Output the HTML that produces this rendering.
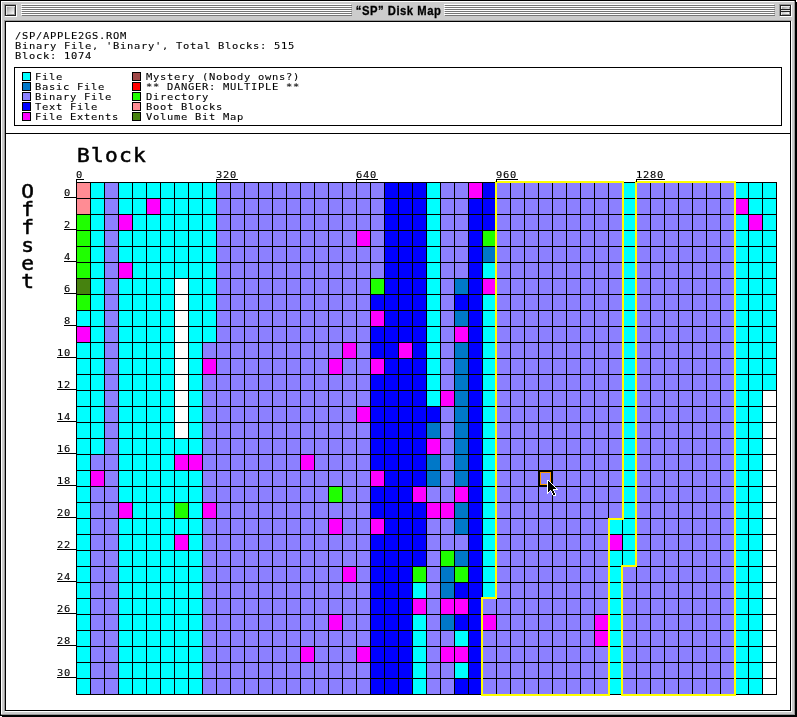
<!DOCTYPE html>
<html lang="en">
<head>
<meta charset="utf-8">
<title>"SP" Disk Map</title>
<style>
html,body{margin:0;padding:0;background:#fff;}
body{width:797px;height:717px;position:relative;overflow:hidden;}
.win{position:absolute;left:0;top:0;width:797px;height:717px;}
.abs{position:absolute;}
.t{position:absolute;white-space:pre;color:#000;line-height:12px;transform:scaleX(1.1);transform-origin:0 0;will-change:transform;}
.s{font-family:"DejaVu Sans Mono", "Liberation Mono", monospace;font-size:9.5px;letter-spacing:0.645px;-webkit-text-stroke:0.1px #000;}
.b{font-family:"DejaVu Sans Mono", "Liberation Mono", monospace;font-size:19.3px;letter-spacing:1.109px;line-height:18px;-webkit-text-stroke:0.5px #000;}
.title{position:absolute;left:0;top:4px;width:797px;text-align:center;font-family:"Liberation Sans",sans-serif;font-weight:bold;font-size:12.5px;letter-spacing:0.58px;line-height:14px;color:#000;white-space:pre;will-change:transform;}
.title span{position:relative;left:0px;display:inline-block;transform:scaleX(0.9);transform-origin:50% 50%;-webkit-text-stroke:0.3px #000;}
.v{writing-mode:vertical-rl;text-orientation:upright;letter-spacing:-5.0px;line-height:24px;}
.sw{position:absolute;width:7px;height:7px;border:1px solid #000;display:block;}
.map{position:absolute;left:0;top:0;}
</style>
</head>
<body>
<div class="win">
<!-- window frame -->
<div class="abs" style="left:0;top:0;width:796px;height:716px;background:#000"></div>
<div class="abs" style="left:2px;top:2px;width:795px;height:715px;background:#000"></div>
<div class="abs" style="left:1px;top:1px;width:794px;height:714px;background:#999"></div>
<div class="abs" style="left:1px;top:1px;width:793px;height:713px;background:#fff"></div>
<div class="abs" style="left:2px;top:2px;width:792px;height:712px;background:#ccc"></div>
<!-- title bar stripes -->
<div class="abs" style="left:21px;top:4px;width:330px;height:12px;background:repeating-linear-gradient(to bottom,#fff 0,#fff 1px,transparent 1px,transparent 2px)"></div>
<div class="abs" style="left:22px;top:4px;width:330px;height:12px;background:repeating-linear-gradient(to bottom,transparent 0,transparent 1px,#777 1px,#777 2px)"></div>
<div class="abs" style="left:444px;top:4px;width:330px;height:12px;background:repeating-linear-gradient(to bottom,#fff 0,#fff 1px,transparent 1px,transparent 2px)"></div>
<div class="abs" style="left:445px;top:4px;width:330px;height:12px;background:repeating-linear-gradient(to bottom,transparent 0,transparent 1px,#777 1px,#777 2px)"></div>
<!-- close box -->
<div class="abs" style="left:4px;top:4px;width:12px;height:12px;background:#999"></div>
<div class="abs" style="left:5px;top:5px;width:12px;height:12px;background:#fff"></div>
<div class="abs" style="left:5px;top:5px;width:11px;height:11px;background:#222"></div>
<div class="abs" style="left:6px;top:6px;width:9px;height:9px;background:#e8e8e8"></div>
<div class="abs" style="left:6px;top:6px;width:1px;height:1px;background:#fff"></div>
<div class="abs" style="left:7px;top:7px;width:8px;height:8px;background:#999"></div>
<div class="abs" style="left:7px;top:7px;width:7px;height:7px;background:linear-gradient(135deg,#a0a0a0 0%,#d0d0d0 50%,#fff 100%)"></div>
<!-- collapse box -->
<div class="abs" style="left:779px;top:4px;width:12px;height:12px;background:#999"></div>
<div class="abs" style="left:780px;top:5px;width:12px;height:12px;background:#fff"></div>
<div class="abs" style="left:780px;top:5px;width:11px;height:11px;background:#222"></div>
<div class="abs" style="left:781px;top:6px;width:9px;height:9px;background:#e8e8e8"></div>
<div class="abs" style="left:781px;top:6px;width:1px;height:1px;background:#fff"></div>
<div class="abs" style="left:782px;top:7px;width:8px;height:8px;background:#999"></div>
<div class="abs" style="left:782px;top:7px;width:7px;height:7px;background:linear-gradient(135deg,#a0a0a0 0%,#d0d0d0 50%,#fff 100%)"></div>
<div class="abs" style="left:781px;top:9px;width:9px;height:3px;background:#222"></div>
<div class="abs" style="left:781px;top:10px;width:9px;height:1px;background:#ddd"></div>
<div class="title"><span>&#8220;SP&#8221; Disk Map</span></div>
<!-- content frame -->
<div class="abs" style="left:5px;top:21px;width:787px;height:691px;background:#fff"></div>
<div class="abs" style="left:4px;top:20px;width:787px;height:691px;background:#999"></div>
<div class="abs" style="left:5px;top:21px;width:786px;height:690px;background:#000"></div>
<div class="abs" style="left:6px;top:22px;width:784px;height:688px;background:#fff"></div>
<div class="abs" style="left:6px;top:133px;width:784px;height:1px;background:#000"></div>
<!-- info text -->
<span class="t s" style="left:14.5px;top:30px">/SP/APPLE2GS.ROM</span>
<span class="t s" style="left:14.5px;top:30px;margin-top:10px">Binary File, 'Binary', Total Blocks: 515</span>
<span class="t s" style="left:14.5px;top:30px;margin-top:20px">Block: 1074</span>
<!-- legend -->
<div class="abs" style="left:14px;top:67px;width:766px;height:57px;border:1px solid #000"></div>
<i class="sw" style="left:22px;top:72px;background:#00ffff"></i><span class="t s" style="left:35px;top:71px;margin-top:0px">File</span>
<i class="sw" style="left:22px;top:82px;background:#0078c8"></i><span class="t s" style="left:35px;top:71px;margin-top:10px">Basic File</span>
<i class="sw" style="left:22px;top:92px;background:#8c80ff"></i><span class="t s" style="left:35px;top:71px;margin-top:20px">Binary File</span>
<i class="sw" style="left:22px;top:102px;background:#0000ff"></i><span class="t s" style="left:35px;top:71px;margin-top:30px">Text File</span>
<i class="sw" style="left:22px;top:112px;background:#ff00ff"></i><span class="t s" style="left:35px;top:71px;margin-top:40px">File Extents</span>
<i class="sw" style="left:132px;top:72px;background:#a04848"></i><span class="t s" style="left:146px;top:71px;margin-top:0px">Mystery (Nobody owns?)</span>
<i class="sw" style="left:132px;top:82px;background:#ff0000"></i><span class="t s" style="left:146px;top:71px;margin-top:10px">** DANGER: MULTIPLE **</span>
<i class="sw" style="left:132px;top:92px;background:#1fff00"></i><span class="t s" style="left:146px;top:71px;margin-top:20px">Directory</span>
<i class="sw" style="left:132px;top:102px;background:#ff8c94"></i><span class="t s" style="left:146px;top:71px;margin-top:30px">Boot Blocks</span>
<i class="sw" style="left:132px;top:112px;background:#46820f"></i><span class="t s" style="left:146px;top:71px;margin-top:40px">Volume Bit Map</span>
<!-- axes titles -->
<span class="t b" style="left:77px;top:147px">Block</span>
<span class="t b v" style="left:14px;top:180px">Offset</span>
<svg class="map" width="797" height="717" viewBox="0 0 797 717" shape-rendering="crispEdges">
<rect x="76" y="182" width="701" height="513" fill="#000"/>
<path fill="#ff8c94" d="M77 183h13v15h-13zM77 199h13v15h-13z"/>
<path fill="#00ffff" d="M91 183h13v15h-13zM119 183h13v15h-13zM133 183h13v15h-13zM147 183h13v15h-13zM161 183h13v15h-13zM175 183h13v15h-13zM189 183h13v15h-13zM203 183h13v15h-13zM427 183h13v15h-13zM623 183h13v15h-13zM735 183h13v15h-13zM749 183h13v15h-13zM763 183h13v15h-13zM91 199h13v15h-13zM119 199h13v15h-13zM133 199h13v15h-13zM161 199h13v15h-13zM175 199h13v15h-13zM189 199h13v15h-13zM203 199h13v15h-13zM427 199h13v15h-13zM623 199h13v15h-13zM749 199h13v15h-13zM763 199h13v15h-13zM91 215h13v15h-13zM133 215h13v15h-13zM147 215h13v15h-13zM161 215h13v15h-13zM175 215h13v15h-13zM189 215h13v15h-13zM203 215h13v15h-13zM427 215h13v15h-13zM623 215h13v15h-13zM735 215h13v15h-13zM763 215h13v15h-13zM91 231h13v15h-13zM119 231h13v15h-13zM133 231h13v15h-13zM147 231h13v15h-13zM161 231h13v15h-13zM175 231h13v15h-13zM189 231h13v15h-13zM203 231h13v15h-13zM427 231h13v15h-13zM623 231h13v15h-13zM735 231h13v15h-13zM749 231h13v15h-13zM763 231h13v15h-13zM91 247h13v15h-13zM119 247h13v15h-13zM133 247h13v15h-13zM147 247h13v15h-13zM161 247h13v15h-13zM175 247h13v15h-13zM189 247h13v15h-13zM203 247h13v15h-13zM427 247h13v15h-13zM623 247h13v15h-13zM735 247h13v15h-13zM749 247h13v15h-13zM763 247h13v15h-13zM91 263h13v15h-13zM133 263h13v15h-13zM147 263h13v15h-13zM161 263h13v15h-13zM175 263h13v15h-13zM189 263h13v15h-13zM203 263h13v15h-13zM427 263h13v15h-13zM483 263h13v15h-13zM623 263h13v15h-13zM735 263h13v15h-13zM749 263h13v15h-13zM763 263h13v15h-13zM91 279h13v15h-13zM119 279h13v15h-13zM133 279h13v15h-13zM147 279h13v15h-13zM161 279h13v15h-13zM189 279h13v15h-13zM203 279h13v15h-13zM427 279h13v15h-13zM623 279h13v15h-13zM735 279h13v15h-13zM749 279h13v15h-13zM763 279h13v15h-13zM91 295h13v15h-13zM119 295h13v15h-13zM133 295h13v15h-13zM147 295h13v15h-13zM161 295h13v15h-13zM189 295h13v15h-13zM203 295h13v15h-13zM427 295h13v15h-13zM483 295h13v15h-13zM623 295h13v15h-13zM735 295h13v15h-13zM749 295h13v15h-13zM763 295h13v15h-13zM77 311h13v15h-13zM91 311h13v15h-13zM119 311h13v15h-13zM133 311h13v15h-13zM147 311h13v15h-13zM161 311h13v15h-13zM189 311h13v15h-13zM203 311h13v15h-13zM427 311h13v15h-13zM483 311h13v15h-13zM623 311h13v15h-13zM735 311h13v15h-13zM749 311h13v15h-13zM763 311h13v15h-13zM91 327h13v15h-13zM119 327h13v15h-13zM133 327h13v15h-13zM147 327h13v15h-13zM161 327h13v15h-13zM189 327h13v15h-13zM203 327h13v15h-13zM427 327h13v15h-13zM483 327h13v15h-13zM623 327h13v15h-13zM735 327h13v15h-13zM749 327h13v15h-13zM763 327h13v15h-13zM77 343h13v15h-13zM91 343h13v15h-13zM119 343h13v15h-13zM133 343h13v15h-13zM147 343h13v15h-13zM161 343h13v15h-13zM189 343h13v15h-13zM427 343h13v15h-13zM483 343h13v15h-13zM623 343h13v15h-13zM735 343h13v15h-13zM749 343h13v15h-13zM763 343h13v15h-13zM77 359h13v15h-13zM91 359h13v15h-13zM119 359h13v15h-13zM133 359h13v15h-13zM147 359h13v15h-13zM161 359h13v15h-13zM189 359h13v15h-13zM427 359h13v15h-13zM483 359h13v15h-13zM623 359h13v15h-13zM735 359h13v15h-13zM749 359h13v15h-13zM763 359h13v15h-13zM77 375h13v15h-13zM91 375h13v15h-13zM119 375h13v15h-13zM133 375h13v15h-13zM147 375h13v15h-13zM161 375h13v15h-13zM189 375h13v15h-13zM427 375h13v15h-13zM483 375h13v15h-13zM623 375h13v15h-13zM735 375h13v15h-13zM749 375h13v15h-13zM763 375h13v15h-13zM77 391h13v15h-13zM91 391h13v15h-13zM119 391h13v15h-13zM133 391h13v15h-13zM147 391h13v15h-13zM161 391h13v15h-13zM189 391h13v15h-13zM427 391h13v15h-13zM483 391h13v15h-13zM623 391h13v15h-13zM735 391h13v15h-13zM749 391h13v15h-13zM77 407h13v15h-13zM91 407h13v15h-13zM119 407h13v15h-13zM133 407h13v15h-13zM147 407h13v15h-13zM161 407h13v15h-13zM189 407h13v15h-13zM483 407h13v15h-13zM623 407h13v15h-13zM735 407h13v15h-13zM749 407h13v15h-13zM77 423h13v15h-13zM91 423h13v15h-13zM119 423h13v15h-13zM133 423h13v15h-13zM147 423h13v15h-13zM161 423h13v15h-13zM189 423h13v15h-13zM483 423h13v15h-13zM623 423h13v15h-13zM735 423h13v15h-13zM749 423h13v15h-13zM77 439h13v15h-13zM91 439h13v15h-13zM119 439h13v15h-13zM133 439h13v15h-13zM147 439h13v15h-13zM161 439h13v15h-13zM175 439h13v15h-13zM189 439h13v15h-13zM483 439h13v15h-13zM623 439h13v15h-13zM735 439h13v15h-13zM749 439h13v15h-13zM77 455h13v15h-13zM119 455h13v15h-13zM133 455h13v15h-13zM147 455h13v15h-13zM161 455h13v15h-13zM483 455h13v15h-13zM623 455h13v15h-13zM735 455h13v15h-13zM749 455h13v15h-13zM77 471h13v15h-13zM119 471h13v15h-13zM133 471h13v15h-13zM147 471h13v15h-13zM161 471h13v15h-13zM175 471h13v15h-13zM189 471h13v15h-13zM483 471h13v15h-13zM623 471h13v15h-13zM735 471h13v15h-13zM749 471h13v15h-13zM77 487h13v15h-13zM119 487h13v15h-13zM133 487h13v15h-13zM147 487h13v15h-13zM161 487h13v15h-13zM175 487h13v15h-13zM189 487h13v15h-13zM483 487h13v15h-13zM623 487h13v15h-13zM735 487h13v15h-13zM749 487h13v15h-13zM77 503h13v15h-13zM133 503h13v15h-13zM147 503h13v15h-13zM161 503h13v15h-13zM189 503h13v15h-13zM483 503h13v15h-13zM623 503h13v15h-13zM735 503h13v15h-13zM749 503h13v15h-13zM77 519h13v15h-13zM119 519h13v15h-13zM133 519h13v15h-13zM147 519h13v15h-13zM161 519h13v15h-13zM175 519h13v15h-13zM189 519h13v15h-13zM483 519h13v15h-13zM609 519h13v15h-13zM623 519h13v15h-13zM735 519h13v15h-13zM749 519h13v15h-13zM77 535h13v15h-13zM119 535h13v15h-13zM133 535h13v15h-13zM147 535h13v15h-13zM161 535h13v15h-13zM189 535h13v15h-13zM483 535h13v15h-13zM623 535h13v15h-13zM735 535h13v15h-13zM749 535h13v15h-13zM77 551h13v15h-13zM119 551h13v15h-13zM133 551h13v15h-13zM147 551h13v15h-13zM161 551h13v15h-13zM175 551h13v15h-13zM189 551h13v15h-13zM483 551h13v15h-13zM609 551h13v15h-13zM623 551h13v15h-13zM735 551h13v15h-13zM749 551h13v15h-13zM77 567h13v15h-13zM119 567h13v15h-13zM133 567h13v15h-13zM147 567h13v15h-13zM161 567h13v15h-13zM175 567h13v15h-13zM189 567h13v15h-13zM483 567h13v15h-13zM609 567h13v15h-13zM735 567h13v15h-13zM749 567h13v15h-13zM77 583h13v15h-13zM119 583h13v15h-13zM133 583h13v15h-13zM147 583h13v15h-13zM161 583h13v15h-13zM175 583h13v15h-13zM189 583h13v15h-13zM413 583h13v15h-13zM483 583h13v15h-13zM609 583h13v15h-13zM735 583h13v15h-13zM749 583h13v15h-13zM77 599h13v15h-13zM119 599h13v15h-13zM133 599h13v15h-13zM147 599h13v15h-13zM161 599h13v15h-13zM175 599h13v15h-13zM189 599h13v15h-13zM609 599h13v15h-13zM735 599h13v15h-13zM749 599h13v15h-13zM77 615h13v15h-13zM119 615h13v15h-13zM133 615h13v15h-13zM147 615h13v15h-13zM161 615h13v15h-13zM175 615h13v15h-13zM189 615h13v15h-13zM413 615h13v15h-13zM609 615h13v15h-13zM735 615h13v15h-13zM749 615h13v15h-13zM77 631h13v15h-13zM119 631h13v15h-13zM133 631h13v15h-13zM147 631h13v15h-13zM161 631h13v15h-13zM175 631h13v15h-13zM189 631h13v15h-13zM413 631h13v15h-13zM455 631h13v15h-13zM609 631h13v15h-13zM735 631h13v15h-13zM749 631h13v15h-13zM77 647h13v15h-13zM119 647h13v15h-13zM133 647h13v15h-13zM147 647h13v15h-13zM161 647h13v15h-13zM175 647h13v15h-13zM189 647h13v15h-13zM413 647h13v15h-13zM609 647h13v15h-13zM735 647h13v15h-13zM749 647h13v15h-13zM77 663h13v15h-13zM119 663h13v15h-13zM133 663h13v15h-13zM147 663h13v15h-13zM161 663h13v15h-13zM175 663h13v15h-13zM189 663h13v15h-13zM413 663h13v15h-13zM455 663h13v15h-13zM609 663h13v15h-13zM735 663h13v15h-13zM749 663h13v15h-13zM77 679h13v15h-13zM119 679h13v15h-13zM133 679h13v15h-13zM147 679h13v15h-13zM161 679h13v15h-13zM175 679h13v15h-13zM189 679h13v15h-13zM413 679h13v15h-13zM609 679h13v15h-13zM735 679h13v15h-13zM749 679h13v15h-13z"/>
<path fill="#8c80ff" d="M105 183h13v15h-13zM217 183h13v15h-13zM231 183h13v15h-13zM245 183h13v15h-13zM259 183h13v15h-13zM273 183h13v15h-13zM287 183h13v15h-13zM301 183h13v15h-13zM315 183h13v15h-13zM329 183h13v15h-13zM343 183h13v15h-13zM357 183h13v15h-13zM371 183h13v15h-13zM441 183h13v15h-13zM455 183h13v15h-13zM497 183h13v15h-13zM511 183h13v15h-13zM525 183h13v15h-13zM539 183h13v15h-13zM553 183h13v15h-13zM567 183h13v15h-13zM581 183h13v15h-13zM595 183h13v15h-13zM609 183h13v15h-13zM637 183h13v15h-13zM651 183h13v15h-13zM665 183h13v15h-13zM679 183h13v15h-13zM693 183h13v15h-13zM707 183h13v15h-13zM721 183h13v15h-13zM105 199h13v15h-13zM217 199h13v15h-13zM231 199h13v15h-13zM245 199h13v15h-13zM259 199h13v15h-13zM273 199h13v15h-13zM287 199h13v15h-13zM301 199h13v15h-13zM315 199h13v15h-13zM329 199h13v15h-13zM343 199h13v15h-13zM357 199h13v15h-13zM371 199h13v15h-13zM441 199h13v15h-13zM455 199h13v15h-13zM497 199h13v15h-13zM511 199h13v15h-13zM525 199h13v15h-13zM539 199h13v15h-13zM553 199h13v15h-13zM567 199h13v15h-13zM581 199h13v15h-13zM595 199h13v15h-13zM609 199h13v15h-13zM637 199h13v15h-13zM651 199h13v15h-13zM665 199h13v15h-13zM679 199h13v15h-13zM693 199h13v15h-13zM707 199h13v15h-13zM721 199h13v15h-13zM105 215h13v15h-13zM217 215h13v15h-13zM231 215h13v15h-13zM245 215h13v15h-13zM259 215h13v15h-13zM273 215h13v15h-13zM287 215h13v15h-13zM301 215h13v15h-13zM315 215h13v15h-13zM329 215h13v15h-13zM343 215h13v15h-13zM357 215h13v15h-13zM371 215h13v15h-13zM441 215h13v15h-13zM455 215h13v15h-13zM497 215h13v15h-13zM511 215h13v15h-13zM525 215h13v15h-13zM539 215h13v15h-13zM553 215h13v15h-13zM567 215h13v15h-13zM581 215h13v15h-13zM595 215h13v15h-13zM609 215h13v15h-13zM637 215h13v15h-13zM651 215h13v15h-13zM665 215h13v15h-13zM679 215h13v15h-13zM693 215h13v15h-13zM707 215h13v15h-13zM721 215h13v15h-13zM105 231h13v15h-13zM217 231h13v15h-13zM231 231h13v15h-13zM245 231h13v15h-13zM259 231h13v15h-13zM273 231h13v15h-13zM287 231h13v15h-13zM301 231h13v15h-13zM315 231h13v15h-13zM329 231h13v15h-13zM343 231h13v15h-13zM371 231h13v15h-13zM441 231h13v15h-13zM455 231h13v15h-13zM497 231h13v15h-13zM511 231h13v15h-13zM525 231h13v15h-13zM539 231h13v15h-13zM553 231h13v15h-13zM567 231h13v15h-13zM581 231h13v15h-13zM595 231h13v15h-13zM609 231h13v15h-13zM637 231h13v15h-13zM651 231h13v15h-13zM665 231h13v15h-13zM679 231h13v15h-13zM693 231h13v15h-13zM707 231h13v15h-13zM721 231h13v15h-13zM105 247h13v15h-13zM217 247h13v15h-13zM231 247h13v15h-13zM245 247h13v15h-13zM259 247h13v15h-13zM273 247h13v15h-13zM287 247h13v15h-13zM301 247h13v15h-13zM315 247h13v15h-13zM329 247h13v15h-13zM343 247h13v15h-13zM357 247h13v15h-13zM371 247h13v15h-13zM441 247h13v15h-13zM455 247h13v15h-13zM497 247h13v15h-13zM511 247h13v15h-13zM525 247h13v15h-13zM539 247h13v15h-13zM553 247h13v15h-13zM567 247h13v15h-13zM581 247h13v15h-13zM595 247h13v15h-13zM609 247h13v15h-13zM637 247h13v15h-13zM651 247h13v15h-13zM665 247h13v15h-13zM679 247h13v15h-13zM693 247h13v15h-13zM707 247h13v15h-13zM721 247h13v15h-13zM105 263h13v15h-13zM217 263h13v15h-13zM231 263h13v15h-13zM245 263h13v15h-13zM259 263h13v15h-13zM273 263h13v15h-13zM287 263h13v15h-13zM301 263h13v15h-13zM315 263h13v15h-13zM329 263h13v15h-13zM343 263h13v15h-13zM357 263h13v15h-13zM371 263h13v15h-13zM441 263h13v15h-13zM455 263h13v15h-13zM497 263h13v15h-13zM511 263h13v15h-13zM525 263h13v15h-13zM539 263h13v15h-13zM553 263h13v15h-13zM567 263h13v15h-13zM581 263h13v15h-13zM595 263h13v15h-13zM609 263h13v15h-13zM637 263h13v15h-13zM651 263h13v15h-13zM665 263h13v15h-13zM679 263h13v15h-13zM693 263h13v15h-13zM707 263h13v15h-13zM721 263h13v15h-13zM105 279h13v15h-13zM217 279h13v15h-13zM231 279h13v15h-13zM245 279h13v15h-13zM259 279h13v15h-13zM273 279h13v15h-13zM287 279h13v15h-13zM301 279h13v15h-13zM315 279h13v15h-13zM329 279h13v15h-13zM343 279h13v15h-13zM357 279h13v15h-13zM441 279h13v15h-13zM497 279h13v15h-13zM511 279h13v15h-13zM525 279h13v15h-13zM539 279h13v15h-13zM553 279h13v15h-13zM567 279h13v15h-13zM581 279h13v15h-13zM595 279h13v15h-13zM609 279h13v15h-13zM637 279h13v15h-13zM651 279h13v15h-13zM665 279h13v15h-13zM679 279h13v15h-13zM693 279h13v15h-13zM707 279h13v15h-13zM721 279h13v15h-13zM105 295h13v15h-13zM217 295h13v15h-13zM231 295h13v15h-13zM245 295h13v15h-13zM259 295h13v15h-13zM273 295h13v15h-13zM287 295h13v15h-13zM301 295h13v15h-13zM315 295h13v15h-13zM329 295h13v15h-13zM343 295h13v15h-13zM357 295h13v15h-13zM441 295h13v15h-13zM497 295h13v15h-13zM511 295h13v15h-13zM525 295h13v15h-13zM539 295h13v15h-13zM553 295h13v15h-13zM567 295h13v15h-13zM581 295h13v15h-13zM595 295h13v15h-13zM609 295h13v15h-13zM637 295h13v15h-13zM651 295h13v15h-13zM665 295h13v15h-13zM679 295h13v15h-13zM693 295h13v15h-13zM707 295h13v15h-13zM721 295h13v15h-13zM105 311h13v15h-13zM217 311h13v15h-13zM231 311h13v15h-13zM245 311h13v15h-13zM259 311h13v15h-13zM273 311h13v15h-13zM287 311h13v15h-13zM301 311h13v15h-13zM315 311h13v15h-13zM329 311h13v15h-13zM343 311h13v15h-13zM357 311h13v15h-13zM441 311h13v15h-13zM497 311h13v15h-13zM511 311h13v15h-13zM525 311h13v15h-13zM539 311h13v15h-13zM553 311h13v15h-13zM567 311h13v15h-13zM581 311h13v15h-13zM595 311h13v15h-13zM609 311h13v15h-13zM637 311h13v15h-13zM651 311h13v15h-13zM665 311h13v15h-13zM679 311h13v15h-13zM693 311h13v15h-13zM707 311h13v15h-13zM721 311h13v15h-13zM105 327h13v15h-13zM217 327h13v15h-13zM231 327h13v15h-13zM245 327h13v15h-13zM259 327h13v15h-13zM273 327h13v15h-13zM287 327h13v15h-13zM301 327h13v15h-13zM315 327h13v15h-13zM329 327h13v15h-13zM343 327h13v15h-13zM357 327h13v15h-13zM441 327h13v15h-13zM497 327h13v15h-13zM511 327h13v15h-13zM525 327h13v15h-13zM539 327h13v15h-13zM553 327h13v15h-13zM567 327h13v15h-13zM581 327h13v15h-13zM595 327h13v15h-13zM609 327h13v15h-13zM637 327h13v15h-13zM651 327h13v15h-13zM665 327h13v15h-13zM679 327h13v15h-13zM693 327h13v15h-13zM707 327h13v15h-13zM721 327h13v15h-13zM105 343h13v15h-13zM203 343h13v15h-13zM217 343h13v15h-13zM231 343h13v15h-13zM245 343h13v15h-13zM259 343h13v15h-13zM273 343h13v15h-13zM287 343h13v15h-13zM301 343h13v15h-13zM315 343h13v15h-13zM329 343h13v15h-13zM357 343h13v15h-13zM441 343h13v15h-13zM497 343h13v15h-13zM511 343h13v15h-13zM525 343h13v15h-13zM539 343h13v15h-13zM553 343h13v15h-13zM567 343h13v15h-13zM581 343h13v15h-13zM595 343h13v15h-13zM609 343h13v15h-13zM637 343h13v15h-13zM651 343h13v15h-13zM665 343h13v15h-13zM679 343h13v15h-13zM693 343h13v15h-13zM707 343h13v15h-13zM721 343h13v15h-13zM105 359h13v15h-13zM217 359h13v15h-13zM231 359h13v15h-13zM245 359h13v15h-13zM259 359h13v15h-13zM273 359h13v15h-13zM287 359h13v15h-13zM301 359h13v15h-13zM315 359h13v15h-13zM343 359h13v15h-13zM357 359h13v15h-13zM441 359h13v15h-13zM497 359h13v15h-13zM511 359h13v15h-13zM525 359h13v15h-13zM539 359h13v15h-13zM553 359h13v15h-13zM567 359h13v15h-13zM581 359h13v15h-13zM595 359h13v15h-13zM609 359h13v15h-13zM637 359h13v15h-13zM651 359h13v15h-13zM665 359h13v15h-13zM679 359h13v15h-13zM693 359h13v15h-13zM707 359h13v15h-13zM721 359h13v15h-13zM105 375h13v15h-13zM203 375h13v15h-13zM217 375h13v15h-13zM231 375h13v15h-13zM245 375h13v15h-13zM259 375h13v15h-13zM273 375h13v15h-13zM287 375h13v15h-13zM301 375h13v15h-13zM315 375h13v15h-13zM329 375h13v15h-13zM343 375h13v15h-13zM357 375h13v15h-13zM441 375h13v15h-13zM497 375h13v15h-13zM511 375h13v15h-13zM525 375h13v15h-13zM539 375h13v15h-13zM553 375h13v15h-13zM567 375h13v15h-13zM581 375h13v15h-13zM595 375h13v15h-13zM609 375h13v15h-13zM637 375h13v15h-13zM651 375h13v15h-13zM665 375h13v15h-13zM679 375h13v15h-13zM693 375h13v15h-13zM707 375h13v15h-13zM721 375h13v15h-13zM105 391h13v15h-13zM203 391h13v15h-13zM217 391h13v15h-13zM231 391h13v15h-13zM245 391h13v15h-13zM259 391h13v15h-13zM273 391h13v15h-13zM287 391h13v15h-13zM301 391h13v15h-13zM315 391h13v15h-13zM329 391h13v15h-13zM343 391h13v15h-13zM357 391h13v15h-13zM497 391h13v15h-13zM511 391h13v15h-13zM525 391h13v15h-13zM539 391h13v15h-13zM553 391h13v15h-13zM567 391h13v15h-13zM581 391h13v15h-13zM595 391h13v15h-13zM609 391h13v15h-13zM637 391h13v15h-13zM651 391h13v15h-13zM665 391h13v15h-13zM679 391h13v15h-13zM693 391h13v15h-13zM707 391h13v15h-13zM721 391h13v15h-13zM105 407h13v15h-13zM203 407h13v15h-13zM217 407h13v15h-13zM231 407h13v15h-13zM245 407h13v15h-13zM259 407h13v15h-13zM273 407h13v15h-13zM287 407h13v15h-13zM301 407h13v15h-13zM315 407h13v15h-13zM329 407h13v15h-13zM343 407h13v15h-13zM441 407h13v15h-13zM497 407h13v15h-13zM511 407h13v15h-13zM525 407h13v15h-13zM539 407h13v15h-13zM553 407h13v15h-13zM567 407h13v15h-13zM581 407h13v15h-13zM595 407h13v15h-13zM609 407h13v15h-13zM637 407h13v15h-13zM651 407h13v15h-13zM665 407h13v15h-13zM679 407h13v15h-13zM693 407h13v15h-13zM707 407h13v15h-13zM721 407h13v15h-13zM105 423h13v15h-13zM203 423h13v15h-13zM217 423h13v15h-13zM231 423h13v15h-13zM245 423h13v15h-13zM259 423h13v15h-13zM273 423h13v15h-13zM287 423h13v15h-13zM301 423h13v15h-13zM315 423h13v15h-13zM329 423h13v15h-13zM343 423h13v15h-13zM357 423h13v15h-13zM441 423h13v15h-13zM497 423h13v15h-13zM511 423h13v15h-13zM525 423h13v15h-13zM539 423h13v15h-13zM553 423h13v15h-13zM567 423h13v15h-13zM581 423h13v15h-13zM595 423h13v15h-13zM609 423h13v15h-13zM637 423h13v15h-13zM651 423h13v15h-13zM665 423h13v15h-13zM679 423h13v15h-13zM693 423h13v15h-13zM707 423h13v15h-13zM721 423h13v15h-13zM105 439h13v15h-13zM203 439h13v15h-13zM217 439h13v15h-13zM231 439h13v15h-13zM245 439h13v15h-13zM259 439h13v15h-13zM273 439h13v15h-13zM287 439h13v15h-13zM301 439h13v15h-13zM315 439h13v15h-13zM329 439h13v15h-13zM343 439h13v15h-13zM357 439h13v15h-13zM441 439h13v15h-13zM497 439h13v15h-13zM511 439h13v15h-13zM525 439h13v15h-13zM539 439h13v15h-13zM553 439h13v15h-13zM567 439h13v15h-13zM581 439h13v15h-13zM595 439h13v15h-13zM609 439h13v15h-13zM637 439h13v15h-13zM651 439h13v15h-13zM665 439h13v15h-13zM679 439h13v15h-13zM693 439h13v15h-13zM707 439h13v15h-13zM721 439h13v15h-13zM91 455h13v15h-13zM105 455h13v15h-13zM203 455h13v15h-13zM217 455h13v15h-13zM231 455h13v15h-13zM245 455h13v15h-13zM259 455h13v15h-13zM273 455h13v15h-13zM287 455h13v15h-13zM315 455h13v15h-13zM329 455h13v15h-13zM343 455h13v15h-13zM357 455h13v15h-13zM441 455h13v15h-13zM497 455h13v15h-13zM511 455h13v15h-13zM525 455h13v15h-13zM539 455h13v15h-13zM553 455h13v15h-13zM567 455h13v15h-13zM581 455h13v15h-13zM595 455h13v15h-13zM609 455h13v15h-13zM637 455h13v15h-13zM651 455h13v15h-13zM665 455h13v15h-13zM679 455h13v15h-13zM693 455h13v15h-13zM707 455h13v15h-13zM721 455h13v15h-13zM105 471h13v15h-13zM203 471h13v15h-13zM217 471h13v15h-13zM231 471h13v15h-13zM245 471h13v15h-13zM259 471h13v15h-13zM273 471h13v15h-13zM287 471h13v15h-13zM301 471h13v15h-13zM315 471h13v15h-13zM329 471h13v15h-13zM343 471h13v15h-13zM357 471h13v15h-13zM441 471h13v15h-13zM497 471h13v15h-13zM511 471h13v15h-13zM525 471h13v15h-13zM539 471h13v15h-13zM553 471h13v15h-13zM567 471h13v15h-13zM581 471h13v15h-13zM595 471h13v15h-13zM609 471h13v15h-13zM637 471h13v15h-13zM651 471h13v15h-13zM665 471h13v15h-13zM679 471h13v15h-13zM693 471h13v15h-13zM707 471h13v15h-13zM721 471h13v15h-13zM91 487h13v15h-13zM105 487h13v15h-13zM203 487h13v15h-13zM217 487h13v15h-13zM231 487h13v15h-13zM245 487h13v15h-13zM259 487h13v15h-13zM273 487h13v15h-13zM287 487h13v15h-13zM301 487h13v15h-13zM315 487h13v15h-13zM343 487h13v15h-13zM357 487h13v15h-13zM427 487h13v15h-13zM441 487h13v15h-13zM497 487h13v15h-13zM511 487h13v15h-13zM525 487h13v15h-13zM539 487h13v15h-13zM553 487h13v15h-13zM567 487h13v15h-13zM581 487h13v15h-13zM595 487h13v15h-13zM609 487h13v15h-13zM637 487h13v15h-13zM651 487h13v15h-13zM665 487h13v15h-13zM679 487h13v15h-13zM693 487h13v15h-13zM707 487h13v15h-13zM721 487h13v15h-13zM91 503h13v15h-13zM105 503h13v15h-13zM217 503h13v15h-13zM231 503h13v15h-13zM245 503h13v15h-13zM259 503h13v15h-13zM273 503h13v15h-13zM287 503h13v15h-13zM301 503h13v15h-13zM315 503h13v15h-13zM329 503h13v15h-13zM343 503h13v15h-13zM357 503h13v15h-13zM497 503h13v15h-13zM511 503h13v15h-13zM525 503h13v15h-13zM539 503h13v15h-13zM553 503h13v15h-13zM567 503h13v15h-13zM581 503h13v15h-13zM595 503h13v15h-13zM609 503h13v15h-13zM637 503h13v15h-13zM651 503h13v15h-13zM665 503h13v15h-13zM679 503h13v15h-13zM693 503h13v15h-13zM707 503h13v15h-13zM721 503h13v15h-13zM91 519h13v15h-13zM105 519h13v15h-13zM203 519h13v15h-13zM217 519h13v15h-13zM231 519h13v15h-13zM245 519h13v15h-13zM259 519h13v15h-13zM273 519h13v15h-13zM287 519h13v15h-13zM301 519h13v15h-13zM315 519h13v15h-13zM343 519h13v15h-13zM357 519h13v15h-13zM427 519h13v15h-13zM441 519h13v15h-13zM497 519h13v15h-13zM511 519h13v15h-13zM525 519h13v15h-13zM539 519h13v15h-13zM553 519h13v15h-13zM567 519h13v15h-13zM581 519h13v15h-13zM595 519h13v15h-13zM637 519h13v15h-13zM651 519h13v15h-13zM665 519h13v15h-13zM679 519h13v15h-13zM693 519h13v15h-13zM707 519h13v15h-13zM721 519h13v15h-13zM91 535h13v15h-13zM105 535h13v15h-13zM203 535h13v15h-13zM217 535h13v15h-13zM231 535h13v15h-13zM245 535h13v15h-13zM259 535h13v15h-13zM273 535h13v15h-13zM287 535h13v15h-13zM301 535h13v15h-13zM315 535h13v15h-13zM329 535h13v15h-13zM343 535h13v15h-13zM357 535h13v15h-13zM427 535h13v15h-13zM441 535h13v15h-13zM455 535h13v15h-13zM497 535h13v15h-13zM511 535h13v15h-13zM525 535h13v15h-13zM539 535h13v15h-13zM553 535h13v15h-13zM567 535h13v15h-13zM581 535h13v15h-13zM595 535h13v15h-13zM637 535h13v15h-13zM651 535h13v15h-13zM665 535h13v15h-13zM679 535h13v15h-13zM693 535h13v15h-13zM707 535h13v15h-13zM721 535h13v15h-13zM91 551h13v15h-13zM105 551h13v15h-13zM203 551h13v15h-13zM217 551h13v15h-13zM231 551h13v15h-13zM245 551h13v15h-13zM259 551h13v15h-13zM273 551h13v15h-13zM287 551h13v15h-13zM301 551h13v15h-13zM315 551h13v15h-13zM329 551h13v15h-13zM343 551h13v15h-13zM357 551h13v15h-13zM427 551h13v15h-13zM497 551h13v15h-13zM511 551h13v15h-13zM525 551h13v15h-13zM539 551h13v15h-13zM553 551h13v15h-13zM567 551h13v15h-13zM581 551h13v15h-13zM595 551h13v15h-13zM637 551h13v15h-13zM651 551h13v15h-13zM665 551h13v15h-13zM679 551h13v15h-13zM693 551h13v15h-13zM707 551h13v15h-13zM721 551h13v15h-13zM91 567h13v15h-13zM105 567h13v15h-13zM203 567h13v15h-13zM217 567h13v15h-13zM231 567h13v15h-13zM245 567h13v15h-13zM259 567h13v15h-13zM273 567h13v15h-13zM287 567h13v15h-13zM301 567h13v15h-13zM315 567h13v15h-13zM329 567h13v15h-13zM357 567h13v15h-13zM427 567h13v15h-13zM497 567h13v15h-13zM511 567h13v15h-13zM525 567h13v15h-13zM539 567h13v15h-13zM553 567h13v15h-13zM567 567h13v15h-13zM581 567h13v15h-13zM595 567h13v15h-13zM623 567h13v15h-13zM637 567h13v15h-13zM651 567h13v15h-13zM665 567h13v15h-13zM679 567h13v15h-13zM693 567h13v15h-13zM707 567h13v15h-13zM721 567h13v15h-13zM91 583h13v15h-13zM105 583h13v15h-13zM203 583h13v15h-13zM217 583h13v15h-13zM231 583h13v15h-13zM245 583h13v15h-13zM259 583h13v15h-13zM273 583h13v15h-13zM287 583h13v15h-13zM301 583h13v15h-13zM315 583h13v15h-13zM329 583h13v15h-13zM343 583h13v15h-13zM357 583h13v15h-13zM427 583h13v15h-13zM497 583h13v15h-13zM511 583h13v15h-13zM525 583h13v15h-13zM539 583h13v15h-13zM553 583h13v15h-13zM567 583h13v15h-13zM581 583h13v15h-13zM595 583h13v15h-13zM623 583h13v15h-13zM637 583h13v15h-13zM651 583h13v15h-13zM665 583h13v15h-13zM679 583h13v15h-13zM693 583h13v15h-13zM707 583h13v15h-13zM721 583h13v15h-13zM91 599h13v15h-13zM105 599h13v15h-13zM203 599h13v15h-13zM217 599h13v15h-13zM231 599h13v15h-13zM245 599h13v15h-13zM259 599h13v15h-13zM273 599h13v15h-13zM287 599h13v15h-13zM301 599h13v15h-13zM315 599h13v15h-13zM329 599h13v15h-13zM343 599h13v15h-13zM357 599h13v15h-13zM427 599h13v15h-13zM483 599h13v15h-13zM497 599h13v15h-13zM511 599h13v15h-13zM525 599h13v15h-13zM539 599h13v15h-13zM553 599h13v15h-13zM567 599h13v15h-13zM581 599h13v15h-13zM595 599h13v15h-13zM623 599h13v15h-13zM637 599h13v15h-13zM651 599h13v15h-13zM665 599h13v15h-13zM679 599h13v15h-13zM693 599h13v15h-13zM707 599h13v15h-13zM721 599h13v15h-13zM91 615h13v15h-13zM105 615h13v15h-13zM203 615h13v15h-13zM217 615h13v15h-13zM231 615h13v15h-13zM245 615h13v15h-13zM259 615h13v15h-13zM273 615h13v15h-13zM287 615h13v15h-13zM301 615h13v15h-13zM315 615h13v15h-13zM343 615h13v15h-13zM357 615h13v15h-13zM427 615h13v15h-13zM497 615h13v15h-13zM511 615h13v15h-13zM525 615h13v15h-13zM539 615h13v15h-13zM553 615h13v15h-13zM567 615h13v15h-13zM581 615h13v15h-13zM623 615h13v15h-13zM637 615h13v15h-13zM651 615h13v15h-13zM665 615h13v15h-13zM679 615h13v15h-13zM693 615h13v15h-13zM707 615h13v15h-13zM721 615h13v15h-13zM91 631h13v15h-13zM105 631h13v15h-13zM203 631h13v15h-13zM217 631h13v15h-13zM231 631h13v15h-13zM245 631h13v15h-13zM259 631h13v15h-13zM273 631h13v15h-13zM287 631h13v15h-13zM301 631h13v15h-13zM315 631h13v15h-13zM329 631h13v15h-13zM343 631h13v15h-13zM357 631h13v15h-13zM427 631h13v15h-13zM441 631h13v15h-13zM483 631h13v15h-13zM497 631h13v15h-13zM511 631h13v15h-13zM525 631h13v15h-13zM539 631h13v15h-13zM553 631h13v15h-13zM567 631h13v15h-13zM581 631h13v15h-13zM623 631h13v15h-13zM637 631h13v15h-13zM651 631h13v15h-13zM665 631h13v15h-13zM679 631h13v15h-13zM693 631h13v15h-13zM707 631h13v15h-13zM721 631h13v15h-13zM91 647h13v15h-13zM105 647h13v15h-13zM203 647h13v15h-13zM217 647h13v15h-13zM231 647h13v15h-13zM245 647h13v15h-13zM259 647h13v15h-13zM273 647h13v15h-13zM287 647h13v15h-13zM315 647h13v15h-13zM329 647h13v15h-13zM343 647h13v15h-13zM427 647h13v15h-13zM483 647h13v15h-13zM497 647h13v15h-13zM511 647h13v15h-13zM525 647h13v15h-13zM539 647h13v15h-13zM553 647h13v15h-13zM567 647h13v15h-13zM581 647h13v15h-13zM595 647h13v15h-13zM623 647h13v15h-13zM637 647h13v15h-13zM651 647h13v15h-13zM665 647h13v15h-13zM679 647h13v15h-13zM693 647h13v15h-13zM707 647h13v15h-13zM721 647h13v15h-13zM91 663h13v15h-13zM105 663h13v15h-13zM203 663h13v15h-13zM217 663h13v15h-13zM231 663h13v15h-13zM245 663h13v15h-13zM259 663h13v15h-13zM273 663h13v15h-13zM287 663h13v15h-13zM301 663h13v15h-13zM315 663h13v15h-13zM329 663h13v15h-13zM343 663h13v15h-13zM357 663h13v15h-13zM427 663h13v15h-13zM441 663h13v15h-13zM483 663h13v15h-13zM497 663h13v15h-13zM511 663h13v15h-13zM525 663h13v15h-13zM539 663h13v15h-13zM553 663h13v15h-13zM567 663h13v15h-13zM581 663h13v15h-13zM595 663h13v15h-13zM623 663h13v15h-13zM637 663h13v15h-13zM651 663h13v15h-13zM665 663h13v15h-13zM679 663h13v15h-13zM693 663h13v15h-13zM707 663h13v15h-13zM721 663h13v15h-13zM91 679h13v15h-13zM105 679h13v15h-13zM203 679h13v15h-13zM217 679h13v15h-13zM231 679h13v15h-13zM245 679h13v15h-13zM259 679h13v15h-13zM273 679h13v15h-13zM287 679h13v15h-13zM301 679h13v15h-13zM315 679h13v15h-13zM329 679h13v15h-13zM343 679h13v15h-13zM357 679h13v15h-13zM427 679h13v15h-13zM441 679h13v15h-13zM483 679h13v15h-13zM497 679h13v15h-13zM511 679h13v15h-13zM525 679h13v15h-13zM539 679h13v15h-13zM553 679h13v15h-13zM567 679h13v15h-13zM581 679h13v15h-13zM595 679h13v15h-13zM623 679h13v15h-13zM637 679h13v15h-13zM651 679h13v15h-13zM665 679h13v15h-13zM679 679h13v15h-13zM693 679h13v15h-13zM707 679h13v15h-13zM721 679h13v15h-13z"/>
<path fill="#0000ff" d="M385 183h13v15h-13zM399 183h13v15h-13zM413 183h13v15h-13zM483 183h13v15h-13zM385 199h13v15h-13zM399 199h13v15h-13zM413 199h13v15h-13zM469 199h13v15h-13zM483 199h13v15h-13zM385 215h13v15h-13zM399 215h13v15h-13zM413 215h13v15h-13zM469 215h13v15h-13zM483 215h13v15h-13zM385 231h13v15h-13zM399 231h13v15h-13zM413 231h13v15h-13zM469 231h13v15h-13zM385 247h13v15h-13zM399 247h13v15h-13zM413 247h13v15h-13zM469 247h13v15h-13zM385 263h13v15h-13zM399 263h13v15h-13zM413 263h13v15h-13zM469 263h13v15h-13zM385 279h13v15h-13zM399 279h13v15h-13zM413 279h13v15h-13zM469 279h13v15h-13zM371 295h13v15h-13zM385 295h13v15h-13zM399 295h13v15h-13zM413 295h13v15h-13zM455 295h13v15h-13zM469 295h13v15h-13zM385 311h13v15h-13zM399 311h13v15h-13zM413 311h13v15h-13zM469 311h13v15h-13zM371 327h13v15h-13zM385 327h13v15h-13zM399 327h13v15h-13zM413 327h13v15h-13zM469 327h13v15h-13zM371 343h13v15h-13zM385 343h13v15h-13zM413 343h13v15h-13zM469 343h13v15h-13zM385 359h13v15h-13zM399 359h13v15h-13zM413 359h13v15h-13zM469 359h13v15h-13zM371 375h13v15h-13zM385 375h13v15h-13zM399 375h13v15h-13zM413 375h13v15h-13zM469 375h13v15h-13zM371 391h13v15h-13zM385 391h13v15h-13zM399 391h13v15h-13zM413 391h13v15h-13zM469 391h13v15h-13zM371 407h13v15h-13zM385 407h13v15h-13zM399 407h13v15h-13zM413 407h13v15h-13zM427 407h13v15h-13zM469 407h13v15h-13zM371 423h13v15h-13zM385 423h13v15h-13zM399 423h13v15h-13zM413 423h13v15h-13zM469 423h13v15h-13zM371 439h13v15h-13zM385 439h13v15h-13zM399 439h13v15h-13zM413 439h13v15h-13zM469 439h13v15h-13zM371 455h13v15h-13zM385 455h13v15h-13zM399 455h13v15h-13zM413 455h13v15h-13zM469 455h13v15h-13zM385 471h13v15h-13zM399 471h13v15h-13zM413 471h13v15h-13zM469 471h13v15h-13zM371 487h13v15h-13zM385 487h13v15h-13zM399 487h13v15h-13zM469 487h13v15h-13zM371 503h13v15h-13zM385 503h13v15h-13zM399 503h13v15h-13zM413 503h13v15h-13zM469 503h13v15h-13zM385 519h13v15h-13zM399 519h13v15h-13zM413 519h13v15h-13zM469 519h13v15h-13zM371 535h13v15h-13zM385 535h13v15h-13zM399 535h13v15h-13zM413 535h13v15h-13zM469 535h13v15h-13zM371 551h13v15h-13zM385 551h13v15h-13zM399 551h13v15h-13zM413 551h13v15h-13zM469 551h13v15h-13zM371 567h13v15h-13zM385 567h13v15h-13zM399 567h13v15h-13zM469 567h13v15h-13zM371 583h13v15h-13zM385 583h13v15h-13zM399 583h13v15h-13zM455 583h13v15h-13zM469 583h13v15h-13zM371 599h13v15h-13zM385 599h13v15h-13zM399 599h13v15h-13zM469 599h13v15h-13zM371 615h13v15h-13zM385 615h13v15h-13zM399 615h13v15h-13zM455 615h13v15h-13zM469 615h13v15h-13zM371 631h13v15h-13zM385 631h13v15h-13zM399 631h13v15h-13zM469 631h13v15h-13zM371 647h13v15h-13zM385 647h13v15h-13zM399 647h13v15h-13zM469 647h13v15h-13zM371 663h13v15h-13zM385 663h13v15h-13zM399 663h13v15h-13zM469 663h13v15h-13zM371 679h13v15h-13zM385 679h13v15h-13zM399 679h13v15h-13zM455 679h13v15h-13zM469 679h13v15h-13z"/>
<path fill="#ff00ff" d="M469 183h13v15h-13zM147 199h13v15h-13zM735 199h13v15h-13zM119 215h13v15h-13zM749 215h13v15h-13zM357 231h13v15h-13zM119 263h13v15h-13zM483 279h13v15h-13zM371 311h13v15h-13zM77 327h13v15h-13zM455 327h13v15h-13zM343 343h13v15h-13zM399 343h13v15h-13zM203 359h13v15h-13zM329 359h13v15h-13zM371 359h13v15h-13zM441 391h13v15h-13zM357 407h13v15h-13zM427 439h13v15h-13zM175 455h13v15h-13zM189 455h13v15h-13zM301 455h13v15h-13zM91 471h13v15h-13zM371 471h13v15h-13zM413 487h13v15h-13zM455 487h13v15h-13zM119 503h13v15h-13zM203 503h13v15h-13zM427 503h13v15h-13zM441 503h13v15h-13zM329 519h13v15h-13zM371 519h13v15h-13zM175 535h13v15h-13zM609 535h13v15h-13zM343 567h13v15h-13zM413 599h13v15h-13zM441 599h13v15h-13zM455 599h13v15h-13zM329 615h13v15h-13zM483 615h13v15h-13zM595 615h13v15h-13zM595 631h13v15h-13zM301 647h13v15h-13zM357 647h13v15h-13zM441 647h13v15h-13zM455 647h13v15h-13z"/>
<path fill="#1fff00" d="M77 215h13v15h-13zM77 231h13v15h-13zM483 231h13v15h-13zM77 247h13v15h-13zM77 263h13v15h-13zM371 279h13v15h-13zM77 295h13v15h-13zM329 487h13v15h-13zM175 503h13v15h-13zM441 551h13v15h-13zM413 567h13v15h-13zM455 567h13v15h-13z"/>
<path fill="#0078c8" d="M483 247h13v15h-13zM455 279h13v15h-13zM455 311h13v15h-13zM455 343h13v15h-13zM455 359h13v15h-13zM455 375h13v15h-13zM455 391h13v15h-13zM455 407h13v15h-13zM427 423h13v15h-13zM455 423h13v15h-13zM455 439h13v15h-13zM427 455h13v15h-13zM455 455h13v15h-13zM427 471h13v15h-13zM455 471h13v15h-13zM455 503h13v15h-13zM455 519h13v15h-13zM455 551h13v15h-13zM441 567h13v15h-13zM441 583h13v15h-13zM441 615h13v15h-13z"/>
<path fill="#46820f" d="M77 279h13v15h-13z"/>
<path fill="#ffffff" d="M175 279h13v15h-13zM175 295h13v15h-13zM175 311h13v15h-13zM175 327h13v15h-13zM175 343h13v15h-13zM175 359h13v15h-13zM175 375h13v15h-13zM175 391h13v15h-13zM763 391h13v15h-13zM175 407h13v15h-13zM763 407h13v15h-13zM175 423h13v15h-13zM763 423h13v15h-13zM763 439h13v15h-13zM763 455h13v15h-13zM763 471h13v15h-13zM763 487h13v15h-13zM763 503h13v15h-13zM763 519h13v15h-13zM763 535h13v15h-13zM763 551h13v15h-13zM763 567h13v15h-13zM763 583h13v15h-13zM763 599h13v15h-13zM763 615h13v15h-13zM763 631h13v15h-13zM763 647h13v15h-13zM763 663h13v15h-13zM763 679h13v15h-13z"/>
<path fill="#ffff00" d="M495 181h129v2h-129zM635 181h101v2h-101zM622 183h2v335h-2zM608 518h16v2h-16zM635 183h2v382h-2zM621 565h16v2h-16zM495 183h2v414h-2zM481 597h16v2h-16zM734 183h2v511h-2zM608 520h2v174h-2zM621 567h2v127h-2zM481 599h2v95h-2zM481 694h129v2h-129zM621 694h115v2h-115z"/>
<rect x="538" y="470" width="15" height="17" fill="#000"/>
<rect x="540" y="472" width="11" height="13" fill="#ff9800"/>
<rect x="541" y="473" width="9" height="11" fill="#8c80ff"/>
<path fill="#000" d="M76 179h8v1h-7v2h-1zM216 179h22v1h-21v2h-1zM356 179h22v1h-21v2h-1zM496 179h22v1h-21v2h-1zM636 179h29v1h-28v2h-1zM64 197h12v1h-12zM64 229h12v1h-12zM64 261h12v1h-12zM64 293h12v1h-12zM64 325h12v1h-12zM57 357h19v1h-19zM57 389h19v1h-19zM57 421h19v1h-19zM57 453h19v1h-19zM57 485h19v1h-19zM57 517h19v1h-19zM57 549h19v1h-19zM57 581h19v1h-19zM57 613h19v1h-19zM57 645h19v1h-19zM57 677h19v1h-19z"/>
<path fill="#fff" d="M547 480h2v1h-2zM547 481h3v1h-3zM547 482h4v1h-4zM547 483h5v1h-5zM547 484h6v1h-6zM547 485h7v1h-7zM547 486h8v1h-8zM547 487h9v1h-9zM547 488h10v1h-10zM547 489h11v1h-11zM547 490h7v1h-7zM547 491h3v1h-3zM551 491h4v1h-4zM547 492h2v1h-2zM551 492h4v1h-4zM547 493h1v1h-1zM552 493h4v1h-4zM552 494h4v1h-4zM553 495h3v1h-3z"/>
<path fill="#000" d="M548 481h1v1h-1zM548 482h2v1h-2zM548 483h3v1h-3zM548 484h4v1h-4zM548 485h5v1h-5zM548 486h6v1h-6zM548 487h7v1h-7zM548 488h8v1h-8zM548 489h5v1h-5zM548 490h2v1h-2zM551 490h2v1h-2zM548 491h1v1h-1zM552 491h2v1h-2zM552 492h2v1h-2zM553 493h2v1h-2zM553 494h2v1h-2z"/>
</svg>
<span class="t s" style="left:76px;top:169px">0</span>
<span class="t s" style="left:216px;top:169px">320</span>
<span class="t s" style="left:356px;top:169px">640</span>
<span class="t s" style="left:496px;top:169px">960</span>
<span class="t s" style="left:636px;top:169px">1280</span>
<span class="t s" style="left:64px;top:198px;margin-top:-11px">0</span>
<span class="t s" style="left:64px;top:230px;margin-top:-11px">2</span>
<span class="t s" style="left:64px;top:262px;margin-top:-11px">4</span>
<span class="t s" style="left:64px;top:294px;margin-top:-11px">6</span>
<span class="t s" style="left:64px;top:326px;margin-top:-11px">8</span>
<span class="t s" style="left:57px;top:358px;margin-top:-11px">10</span>
<span class="t s" style="left:57px;top:390px;margin-top:-11px">12</span>
<span class="t s" style="left:57px;top:422px;margin-top:-11px">14</span>
<span class="t s" style="left:57px;top:454px;margin-top:-11px">16</span>
<span class="t s" style="left:57px;top:486px;margin-top:-11px">18</span>
<span class="t s" style="left:57px;top:518px;margin-top:-11px">20</span>
<span class="t s" style="left:57px;top:550px;margin-top:-11px">22</span>
<span class="t s" style="left:57px;top:582px;margin-top:-11px">24</span>
<span class="t s" style="left:57px;top:614px;margin-top:-11px">26</span>
<span class="t s" style="left:57px;top:646px;margin-top:-11px">28</span>
<span class="t s" style="left:57px;top:678px;margin-top:-11px">30</span>
</div>
</body>
</html>
